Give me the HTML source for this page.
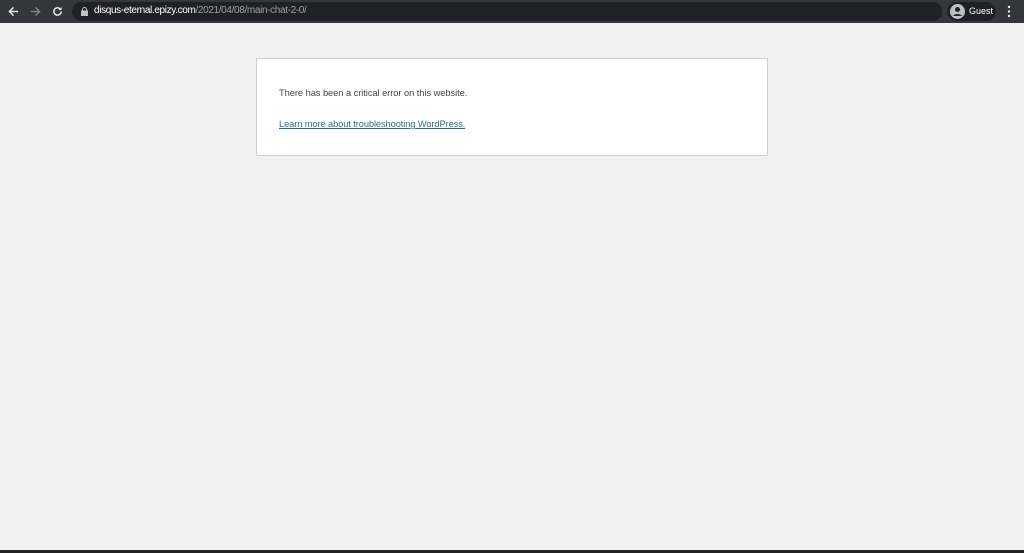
<!DOCTYPE html>
<html><head><meta charset="utf-8"><style>
*{margin:0;padding:0;box-sizing:border-box}
html,body{width:1024px;height:553px;overflow:hidden;background:#f1f1f1;font-family:"Liberation Sans",sans-serif}
.bar{position:absolute;left:0;top:0;width:1024px;height:23px;background:#35363a}
.omni{position:absolute;left:72px;top:2px;width:870px;height:19px;border-radius:10px;background:#202124}
.url{position:absolute;left:94px;top:5px;font-size:10px;color:#fff;letter-spacing:-0.35px;white-space:nowrap}
.url span{color:#9aa0a6}
.guest{position:absolute;left:947px;top:2px;width:49px;height:19px;border-radius:10px;background:#202124}
.guest b{position:absolute;left:22px;top:4px;font-weight:normal;font-size:9px;color:#fff}
.box{position:absolute;left:256px;top:58px;width:512px;height:98px;background:#fff;border:1px solid #ccd0d4}
.t1{position:absolute;left:22px;top:29px;font-size:9.3px;color:#444;letter-spacing:-0.05px}
.t2{position:absolute;left:22px;top:60px;font-size:9.3px;color:#2a6c8f;text-decoration:underline;letter-spacing:-0.1px}
.bot{position:absolute;left:0;top:550px;width:1024px;height:3px;background:#222}
</style></head><body>
<div class="bar">
<svg style="position:absolute;left:8px;top:6px" width="11" height="11" viewBox="0 0 12 12"><path d="M11 6H2M6 1.5L1.5 6 6 10.5" stroke="#e8eaed" stroke-width="1.6" fill="none"/></svg>
<svg style="position:absolute;left:30px;top:6px" width="11" height="11" viewBox="0 0 12 12"><path d="M1 6h9M6 1.5L10.5 6 6 10.5" stroke="#7c7f84" stroke-width="1.6" fill="none"/></svg>
<svg style="position:absolute;left:52px;top:6px" width="11" height="11" viewBox="0 0 12 12"><path d="M10 6a4 4 0 1 1-1.2-2.9" stroke="#e8eaed" stroke-width="1.6" fill="none"/><path d="M10.5 1v3.5H7z" fill="#e8eaed"/></svg>
<div class="omni"></div>
<svg style="position:absolute;left:81px;top:7px" width="7" height="9" viewBox="0 0 7 9"><rect x="0" y="3.5" width="7" height="5.5" fill="#bdc1c6"/><path d="M1.5 3.5V2.5a2 2 0 0 1 4 0v1" stroke="#bdc1c6" fill="none"/></svg>
<div class="url">disqus-eternal.epizy.com<span>/2021/04/08/main-chat-2-0/</span></div>
<div class="guest"><svg style="position:absolute;left:3px;top:2px" width="15" height="15" viewBox="0 0 15 15"><circle cx="7.5" cy="7.5" r="7.5" fill="#bdc1c6"/><circle cx="7.5" cy="5.5" r="2.5" fill="#202124"/><path d="M3 12a5 3.5 0 0 1 9 0" fill="#202124"/></svg><b>Guest</b></div>
<svg style="position:absolute;left:1007px;top:5px" width="4" height="13" viewBox="0 0 4 13"><circle cx="2" cy="2" r="1.2" fill="#e8eaed"/><circle cx="2" cy="6.5" r="1.2" fill="#e8eaed"/><circle cx="2" cy="11" r="1.2" fill="#e8eaed"/></svg>
</div>
<div class="box"><div class="t1">There has been a critical error on this website.</div><div class="t2">Learn more about troubleshooting WordPress.</div></div>
<div class="bot"></div>
</body></html>
